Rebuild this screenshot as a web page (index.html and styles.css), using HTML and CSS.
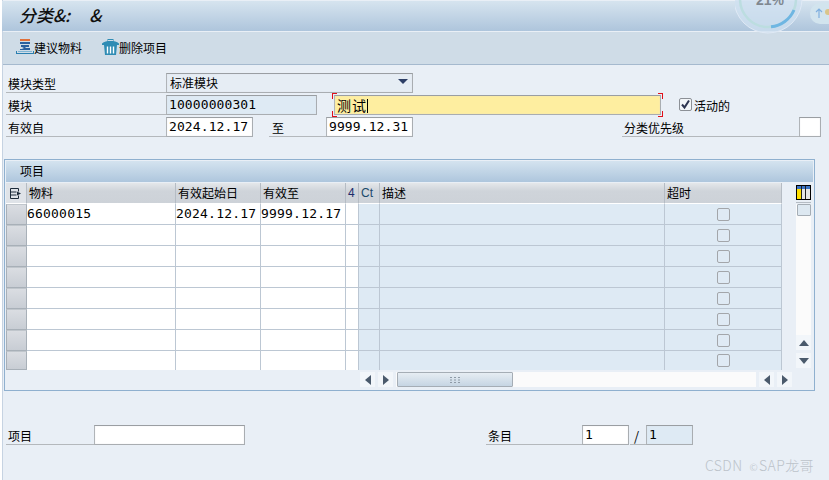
FILE: index.html
```html
<!DOCTYPE html>
<html lang="zh">
<head>
<meta charset="utf-8">
<title>分类</title>
<link rel="stylesheet" href="styles.css">
</head>
<body>
<div class="page">
  <header class="titlebar"><h1 class="title">分类&amp;:&nbsp;&nbsp;&nbsp;&nbsp;&nbsp;&amp;</h1></header>
  <nav class="toolbar">
    <button class="tool tool-first">
      <svg class="tool-icon" width="18" height="16" viewBox="0 0 18 16">
        <rect x="4" y="0" width="10" height="2" fill="#e0703a"/>
        <rect x="4" y="3" width="10" height="2" fill="#2a5f9e"/>
        <path d="M5 6h8v2H9.500v1H14v2H4v-1h2l2-1-2-1H5z" fill="#2a5f9e"/>
        <path d="M0 15v-3h1v2h16v-2h1v3z" fill="#2a7fb0"/>
        <rect x="2" y="12" width="14" height="1" fill="#7fb5d4"/>
      </svg>建议物料</button>
    <button class="tool">
      <svg class="tool-icon" width="17" height="16" viewBox="0 0 17 16">
        <path d="M0 4.500C2 2.500 5 2 8.500 2s6.500 .5 8.500 2.500V6H0z" fill="#2f8cb4"/>
        <rect x="6" y="0.500" width="5" height="2" fill="none" stroke="#2f8cb4"/>
        <path d="M2 6h13l-1 10H3z" fill="#2f8cb4"/>
        <path d="M5.500 7.500v7M8.500 7.500v7M11.500 7.500v7" stroke="#fff" stroke-width="1.400"/>
      </svg>删除项目</button>
  </nav>

  <section class="form">
    <div class="row">
      <label class="lab lab-main">模块类型</label>
      <div class="field select"><span class="cjk">标准模块</span>
        <svg class="drop" width="10" height="5" viewBox="0 0 10 5"><path d="M0 0h10L5 5z" fill="#2d3f66"/></svg>
      </div>
    </div>
    <div class="row">
      <label class="lab lab-main">模块</label>
      <div class="field ro w-mod">10000000301</div>
      <div class="field req"><span class="cjk">测试</span><span class="caret"></span></div>
      <span class="check checked">
        <svg width="13" height="13" viewBox="0 0 13 13"><path d="M3 6.500l2.500 3L10 2.500" fill="none" stroke="#2d3450" stroke-width="2"/></svg>
      </span>
      <span class="check-label">活动的</span>
    </div>
    <div class="row">
      <label class="lab lab-main">有效自</label>
      <div class="field w-date">2024.12.17</div>
      <label class="lab lab-to">至</label>
      <div class="field w-date">9999.12.31</div>
      <label class="lab lab-prio">分类优先级</label>
      <div class="field w-prio"></div>
    </div>
  </section>

  <section class="panel">
    <div class="panel-head">项目</div>
    <div class="panel-body">
      <div class="table-col">
        <div class="table-clip">
          <table class="grid">
            <colgroup>
              <col class="c0"><col class="c1"><col class="c2"><col class="c3"><col class="c4"><col class="c5"><col class="c6"><col class="c7">
            </colgroup>
            <thead>
              <tr>
                <th class="sel-h">
                  <svg width="13" height="13" viewBox="0 0 13 13"><path d="M1.500 1.500h8v3M1.500 1.500v10h8v-3M1.500 5h6M1.500 8h6" fill="none" stroke="#1d2b3a"/><path d="M8 4.500l4 2-4 2z" fill="#1d2b3a"/></svg>
                </th>
                <th>物料</th><th>有效起始日</th><th>有效至</th><th class="num">4</th><th class="ct">Ct</th><th>描述</th><th>超时</th>
              </tr>
            </thead>
            <tbody>
              <tr><td class="sel"></td><td class="mono">66000015</td><td class="mono">2024.12.17</td><td class="mono">9999.12.17</td><td></td><td class="ro-c"></td><td class="ro-c"></td><td class="ro-c"><span class="check"></span></td></tr>
              <tr><td class="sel"></td><td></td><td></td><td></td><td></td><td class="ro-c"></td><td class="ro-c"></td><td class="ro-c"><span class="check"></span></td></tr>
              <tr><td class="sel"></td><td></td><td></td><td></td><td></td><td class="ro-c"></td><td class="ro-c"></td><td class="ro-c"><span class="check"></span></td></tr>
              <tr><td class="sel"></td><td></td><td></td><td></td><td></td><td class="ro-c"></td><td class="ro-c"></td><td class="ro-c"><span class="check"></span></td></tr>
              <tr><td class="sel"></td><td></td><td></td><td></td><td></td><td class="ro-c"></td><td class="ro-c"></td><td class="ro-c"><span class="check"></span></td></tr>
              <tr><td class="sel"></td><td></td><td></td><td></td><td></td><td class="ro-c"></td><td class="ro-c"></td><td class="ro-c"><span class="check"></span></td></tr>
              <tr><td class="sel"></td><td></td><td></td><td></td><td></td><td class="ro-c"></td><td class="ro-c"></td><td class="ro-c"><span class="check"></span></td></tr>
              <tr class="last"><td class="sel"></td><td></td><td></td><td></td><td></td><td class="ro-c"></td><td class="ro-c"></td><td class="ro-c"><span class="check"></span></td></tr>
            </tbody>
          </table>
        </div>
        <div class="hscroll">
          <span class="sbtn"><svg width="6" height="10" viewBox="0 0 6 10"><path d="M6 0v10L0 5z" fill="#4a5a6c"/></svg></span>
          <span class="sbtn"><svg width="6" height="10" viewBox="0 0 6 10"><path d="M0 0v10l6-5z" fill="#4a5a6c"/></svg></span>
          <div class="htrack">
            <span class="thumb"><svg width="10" height="6" viewBox="0 0 10 6"><path d="M0 .5h2M4 .5h2M8 .5h2M0 3h2M4 3h2M8 3h2M0 5.500h2M4 5.500h2M8 5.500h2" stroke="#8e9aa6"/></svg></span>
          </div>
          <span class="sbtn"><svg width="6" height="10" viewBox="0 0 6 10"><path d="M6 0v10L0 5z" fill="#4a5a6c"/></svg></span>
          <span class="sbtn"><svg width="6" height="10" viewBox="0 0 6 10"><path d="M0 0v10l6-5z" fill="#4a5a6c"/></svg></span>
        </div>
      </div>
      <div class="vscroll">
        <div class="config-box">
          <svg class="config" width="15" height="15" viewBox="0 0 15 15">
            <rect x=".5" y=".5" width="14" height="14" fill="#fff" stroke="#000"/>
            <rect x="1" y="1" width="13" height="3" fill="#3b74c4"/>
            <rect x="1" y="4" width="4" height="10" fill="#ffe000"/>
            <rect x="6" y="4" width="3" height="10" fill="#e6e6e6"/>
            <rect x="10" y="4" width="4" height="10" fill="#e6e6e6"/>
            <path d="M5.500 1v13M9.500 1v13" stroke="#222"/>
          </svg>
        </div>
        <div class="vtrack"><span class="vthumb"></span></div>
        <span class="sbtn vbtn"><svg width="10" height="6" viewBox="0 0 10 6"><path d="M0 6h10L5 0z" fill="#4a5a6c"/></svg></span>
        <span class="sbtn vbtn"><svg width="10" height="6" viewBox="0 0 10 6"><path d="M0 0h10L5 6z" fill="#4a5a6c"/></svg></span>
      </div>
    </div>
  </section>

  <section class="footer-row">
    <label class="lab lab-item">项目</label>
    <div class="field w-item"></div>
    <label class="lab lab-entry">条目</label>
    <div class="field w-count">1</div>
    <label class="lab lab-slash">/</label>
    <div class="field ro w-count">1</div>
  </section>
</div>

<div class="meter">
  <svg width="94" height="36" viewBox="0 0 94 36">
    <circle cx="33" cy="-1" r="34" fill="#cfe0f0" fill-opacity=".75" stroke="#dfe9f5"/>
    <circle cx="33" cy="-1" r="28" fill="none" stroke="#bcdde0" stroke-width="2.500"/>
    <path d="M59 10A28 28 0 0 1 36 26.800" fill="none" stroke="#6fb6e2" stroke-width="3"/>
    <text x="21" y="5" class="meter-text">21%</text>
    <rect x="75" y="3" width="40" height="21" rx="10" fill="#d2e4ee"/>
    <path d="M84 9v9M81 12l3-3 3 3" fill="none" stroke="#7fb0e0" stroke-width="1.200"/>
    <circle cx="93" cy="12" r="3" fill="#d9c58a"/>
  </svg>
</div>
<div class="watermark">CSDN&nbsp;&nbsp;<span class="wm-at">©</span>SAP龙哥</div>
</body>
</html>
```
FILE: styles.css
```css
* { box-sizing: border-box; }
html, body { margin: 0; height: 100%; }
body {
  width: 829px;
  height: 480px;
  overflow: hidden;
  background: #fff;
  position: relative;
  font-family: "Noto Sans CJK SC", "Liberation Sans", sans-serif;
  font-size: 12px;
  color: #000;
}
.page {
  margin-left: 2px;
  height: 480px;
  padding-top: 1px;
  background: #e9eff6;
  border-left: 1px solid #c6d3e2;
}
.titlebar {
  height: 30px;
  margin-left: -1px;
  background: linear-gradient(#d6e4ef, #aec5dc);
  display: flex;
  align-items: center;
  padding-left: 17px;
  padding-bottom: 3px;
}
.title {
  margin: 0;
  font-size: 17px;
  font-weight: 500;
  font-style: italic;
  color: #111;
  font-family: "Noto Sans CJK SC", sans-serif;
  white-space: pre;
}
.toolbar {
  height: 33px;
  margin-top: 1px;
  background: #cfdce7;
  border-bottom: 1px solid #a5b9ce;
  display: flex;
  align-items: center;
  padding-left: 13px;
  padding-bottom: 2px;
}
.tool {
  display: flex;
  align-items: center;
  border: 0;
  padding: 0;
  background: none;
  font: inherit;
  color: #000;
  line-height: 17px;
}
.tool-first { margin-right: 20px; }
.tool-icon { display: block; }

.form { padding: 8px 0 0 3px; display: flex; flex-direction: column; gap: 2px; }
.row { display: flex; height: 20px; }
.lab {
  height: 20px;
  border-bottom: 1px solid #b4b8bc;
  line-height: 21px;
  padding-left: 2px;
  white-space: nowrap;
  color: #000;
}
.lab-main { width: 160px; }
.field {
  height: 20px;
  background: #fff;
  border: 1px solid #a9adb1;
  border-top-color: #9a9ea2;
  border-left-color: #b0b4b8;
  box-shadow: inset 0 0 1px #d4d8dc;
  font-family: "DejaVu Sans Mono", monospace;
  font-size: 13px;
  line-height: 18px;
  padding-left: 2px;
  letter-spacing: .1px;
  white-space: nowrap;
}
.cjk { font-family: "Noto Sans CJK SC", sans-serif; letter-spacing: 0; }
.select {
  width: 247px;
  background: #e6edf4;
  display: flex;
  align-items: center;
  justify-content: space-between;
  padding: 0 3px 0 3px;
  font-size: 12px;
}
.drop { display: block; margin-bottom: 3px; margin-right: 1px; }
.ro { background: #deeaf4; }
.w-mod { width: 151px; }
.req {
  width: 327px;
  margin-left: 17px;
  background: #feeea0;
  position: relative;
  padding-left: 2px;
  font-size: 14px;
}
.req .cjk { font-size: 14px; letter-spacing: 1px; }
.caret { display: inline-block; width: 1px; height: 14px; background: #000; vertical-align: -2px; }
.req::before {
  content: "";
  position: absolute;
  inset: -3px -3px;
  background:
    linear-gradient(#e0101a, #e0101a) 0 0 / 5px 1px no-repeat,
    linear-gradient(#e0101a, #e0101a) 0 0 / 1px 6px no-repeat,
    linear-gradient(#e0101a, #e0101a) 0 100% / 5px 1px no-repeat,
    linear-gradient(#e0101a, #e0101a) 0 100% / 1px 6px no-repeat,
    linear-gradient(#e0101a, #e0101a) 100% 0 / 5px 1px no-repeat,
    linear-gradient(#e0101a, #e0101a) 100% 0 / 1px 6px no-repeat,
    linear-gradient(#e0101a, #e0101a) 100% 100% / 5px 1px no-repeat,
    linear-gradient(#e0101a, #e0101a) 100% 100% / 1px 6px no-repeat;
}
.check {
  display: block;
  width: 13px;
  height: 13px;
  border: 1px solid #a3a6aa;
  border-radius: 2px;
  background: #dfeaf4;
  margin: 0 auto;
}
.check svg { display: block; margin: -1px; }
.checked { margin: 3px 0 0 18px; background: #f2f5f8; border-color: #8c9096; }
.check-label { margin-left: 2px; line-height: 21px; }
.w-date { width: 87px; }
.lab-to { width: 57px; margin-left: 16px; padding-left: 3px; }
.lab-prio { width: 177px; margin-left: 209px; }
.w-prio { width: 22px; }

.panel {
  margin: 22px 0 0 1px;
  width: 811px;
  height: 232px;
  border: 1px solid #8fb0cf;
  padding: 1px;
  background: #e9eff6;
}
.panel-head {
  height: 21px;
  background: linear-gradient(#d4e3ef, #aec6dd);
  line-height: 20px;
  padding-left: 14px;
}
.panel-body { display: flex; margin-top: 1px; }
.table-col { width: 787px; }
.table-clip { height: 187px; overflow: hidden; }
.grid { border-collapse: separate; border-spacing: 0; table-layout: fixed; width: 776px; }
.c0 { width: 21px; } .c1 { width: 149px; } .c2 { width: 85px; } .c3 { width: 85px; }
.c4 { width: 13px; } .c5 { width: 21px; } .c6 { width: 285px; } .c7 { width: 117px; }
.grid th {
  height: 21px;
  padding: 0 0 0 2px;
  font-weight: 400;
  text-align: left;
  background: linear-gradient(#e4e7ea, #cfd4da 40%, #cdd2d8);
  border-right: 1px solid #b5bcc4;
  border-bottom: 1px solid #fff;
  line-height: 20px;
  overflow: hidden;
}
.grid th.sel-h { padding: 0 0 0 3px; background: #dfe3e8; }
.sel-h svg { display: block; }
.grid th.num { color: #1d2b6a; padding-left: 2px; font-family: "Liberation Sans", sans-serif; }
.grid th.ct { color: #1a4a6a; font-family: "Liberation Sans", sans-serif; }
.grid td {
  height: 21px;
  padding: 0;
  background: #fff;
  border-right: 1px solid #bcc7d3;
  border-bottom: 1px solid #bcc7d3;
  overflow: hidden;
  white-space: nowrap;
}
.grid td.mono {
  font-family: "DejaVu Sans Mono", monospace;
  font-size: 13px;
  letter-spacing: .2px;
  line-height: 20px;
}
.grid td.ro-c { background: #deeaf4; }
.grid td.sel {
  background: linear-gradient(#dadde2, #c8cdd4);
  border: 1px solid #a8b0b8;
  border-top-color: #c0c6cc;
}
.last td { height: 19px; border-bottom: 0; }

.hscroll { display: flex; gap: 3px; margin: 2px 0 0 354px; height: 16px; }
.sbtn {
  width: 15px;
  height: 15px;
  background: #f2f6fa;
  display: flex;
  align-items: center;
  justify-content: center;
  flex: none;
}
.htrack { width: 360px; background: #fbfbfb; height: 15px; }
.thumb {
  display: flex;
  align-items: center;
  justify-content: center;
  width: 116px;
  height: 15px;
  margin-left: 1px;
  background: linear-gradient(#e6edf3, #c6d5e3);
  border: 1px solid #a5adb5;
  border-radius: 1px;
}
.vscroll { width: 15px; margin-left: 3px; display: flex; flex-direction: column; }
.config-box { height: 20px; padding-top: 2px; border-bottom: 1px solid #b5bcc4; }
.config { display: block; }
.vtrack { height: 131px; margin-top: 1px; background: #fbfbfb; }
.vthumb {
  display: block;
  width: 14px;
  height: 12px;
  margin-left: 1px;
  background: #dde8f1;
  border: 1px solid #a5adb5;
  border-radius: 1px;
}
.vbtn { margin-bottom: 3px; }

.footer-row { display: flex; height: 20px; margin: 34px 0 0 3px; }
.lab-item { width: 88px; }
.w-item { width: 151px; }
.lab-entry { width: 96px; margin-left: 241px; }
.w-count { width: 47px; }
.lab-slash { width: 16px; margin-left: 1px; padding-left: 4px; font-size: 13px; }

.meter { position: absolute; top: 0; right: 0; width: 94px; height: 36px; overflow: hidden; }
.meter svg { display: block; }
.meter-text { font-family: "Liberation Sans", sans-serif; font-size: 14px; font-weight: 700; fill: #808890; }
.watermark {
  position: absolute;
  left: 705px;
  top: 456px;
  font-size: 14px;
  font-weight: 300;
  letter-spacing: .4px;
  line-height: 18px;
  color: #bcc3ca;
  white-space: nowrap;
}
.wm-at { font-size: 10px; margin-right: 1px; }
```
